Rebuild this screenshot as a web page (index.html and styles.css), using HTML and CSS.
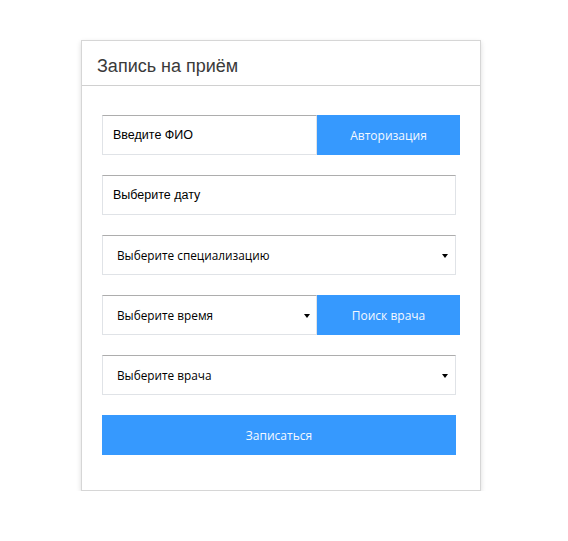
FILE: index.html
```
<!DOCTYPE html>
<html lang="ru">
<head>
<meta charset="utf-8">
<title>Запись на приём</title>
<link rel="stylesheet" href="styles.css">
</head>
<body>
<div class="card">
  <div class="card-header">Запись на приём</div>
  <div class="card-body">
    <div class="row">
      <div class="field field-input grow">Введите ФИО</div>
      <div class="btn btn-side">Авторизация</div>
    </div>
    <div class="field field-input full">Выберите дату</div>
    <div class="field field-select full"><span>Выберите специализацию</span><span class="caret"></span></div>
    <div class="row">
      <div class="field field-select grow"><span>Выберите время</span><span class="caret"></span></div>
      <div class="btn btn-side">Поиск врача</div>
    </div>
    <div class="field field-select full"><span>Выберите врача</span><span class="caret"></span></div>
    <div class="btn full">Записаться</div>
  </div>
</div>
</body>
</html>
```
FILE: styles.css
```
html, body {
  margin: 0;
  padding: 0;
  background: #ffffff;
}
body {
  padding: 40px 0 0 81px;
}
.card {
  width: 398px;
  border: 1px solid #d6d6d6;
  box-shadow: 0 2px 5px rgba(0,0,0,0.14);
  background: #fff;
}
.card-header {
  height: 44px;
  border-bottom: 1px solid #d0d0d0;
  box-sizing: content-box;
  font-family: "Liberation Sans", Arial, sans-serif;
  font-size: 18px;
  color: #3a3a3a;
  padding-left: 15px;
  line-height: 50px;
}
.card-body {
  padding: 29px 20px 35px 20px;
  display: flex;
  flex-direction: column;
  gap: 20px;
}
.row {
  display: flex;
  width: 358px;
  height: 40px;
}
.field {
  box-sizing: border-box;
  height: 40px;
  border: 1px solid #e0e3e7;
  border-top-color: #adadad;
  background: #fff;
  display: flex;
  align-items: center;
  color: #000;
}
.field-input {
  font-family: "Liberation Sans", Arial, sans-serif;
  font-size: 12.5px;
  padding-left: 10px;
}
.field-select {
  font-family: "Open Sans", sans-serif;
  font-size: 11.8px;
  padding-left: 14px;
  padding-right: 7px;
  justify-content: space-between;
}
.grow.field-select {
  padding-right: 6px;
}
.caret {
  width: 0;
  height: 0;
  border-left: 3.5px solid transparent;
  border-right: 3.5px solid transparent;
  border-top: 4px solid #000;
  margin-top: 2px;
}
.full {
  width: 354px;
}
.grow {
  width: 215px;
  flex: none;
}
.btn {
  box-sizing: border-box;
  height: 40px;
  background: #3699fe;
  color: #f4f8ff;
  font-family: "Open Sans", sans-serif;
  font-size: 12px;
  display: flex;
  align-items: center;
  justify-content: center;
}
.btn-side {
  width: 143px;
  flex: none;
}
```
